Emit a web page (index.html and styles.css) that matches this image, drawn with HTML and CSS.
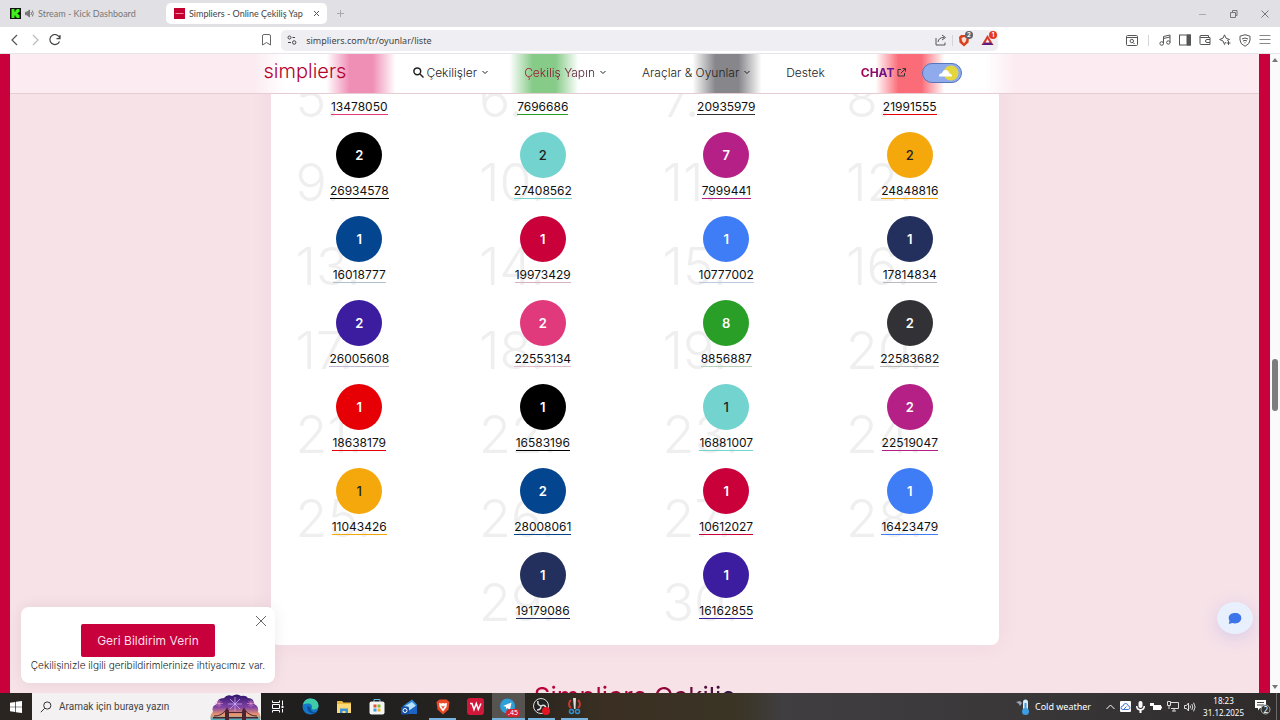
FILE: index.html
```html
<!DOCTYPE html>
<html lang="tr">
<head>
    <meta charset="UTF-8">
    <meta name="viewport" content="width=device-width, initial-scale=1.0">
    <title>Simpliers - Online Çekiliş Yap</title>
    <link rel="stylesheet" href="styles.css">
</head>
<body>
    <!-- tabs -->
    <div class="tabbar">
        <div class="tab">
            <svg width="11" height="11" viewBox="0 0 11 11"><rect width="11" height="11" fill="#111"/><path d="M1.5 1h3v2.5h1V2h1V1h3v3h-1v1h-1v1h1v1h1v3h-3V9h-1V7.500h-1V10h-3z" fill="#3ff01a"/></svg>
            <svg class="sound" width="9" height="9" viewBox="0 0 9 9" fill="none" stroke="#777"><path d="M.5 3.200h1.500L4.500 1v7L2 5.800H.5z" fill="#777"/><path d="M6 3q1 1.500 0 3M7.300 1.500q2 3 0 6"/></svg>
            <span>Stream - Kick Dashboard</span>
        </div>
        <div class="tab active">
            <svg width="11" height="11" viewBox="0 0 11 11"><rect width="11" height="11" fill="#c3002f"/><path d="M1.500 5.500h8" stroke="#f08aa2"/></svg>
            <span>Simpliers - Online Çekiliş Yap</span>
            <button class="tab-close" aria-label="Kapat"><svg width="7" height="7" viewBox="0 0 7 7" stroke="#555"><path d="M1 1l5 5M6 1l-5 5"/></svg></button>
        </div>
        <button class="new-tab" aria-label="Yeni sekme"><svg width="7" height="7" viewBox="0 0 7 7" stroke="#aaa"><path d="M3.500 0v7M0 3.500h7"/></svg></button>
        <div class="window-buttons">
            <button aria-label="Küçült"><svg width="8" height="8" viewBox="0 0 8 8" stroke="#aaa"><path d="M0 4.500h7"/></svg></button>
            <button aria-label="Geri yükle"><svg width="8" height="8" viewBox="0 0 8 8" fill="none" stroke="#777"><path d="M.5 2.500h5v5h-5zM2.500 2.500v-2h4.500v5H5.500"/></svg></button>
            <button aria-label="Kapat"><svg width="8" height="8" viewBox="0 0 8 8" stroke="#777"><path d="M.5.5l7 7M7.500.5l-7 7"/></svg></button>
        </div>
    </div>

    <!-- address bar -->
    <div class="toolbar">
        <div class="nav-buttons">
            <button aria-label="Geri"><svg width="12" height="12" viewBox="0 0 12 12" fill="none" stroke="#555" stroke-width="1.200"><path d="M8 1L3 6l5 5"/></svg></button>
            <button aria-label="İleri"><svg width="12" height="12" viewBox="0 0 12 12" fill="none" stroke="#bbb" stroke-width="1.200"><path d="M4 1l5 5-5 5"/></svg></button>
            <button aria-label="Yenile"><svg width="12" height="12" viewBox="0 0 12 12" fill="none" stroke="#444" stroke-width="1.200"><path d="M10.500 7.500A5 5 0 1 1 10.800 4.500M11 1v3.600H7.500"/></svg></button>
        </div>
        <button class="bookmark" aria-label="Yer işareti"><svg width="9" height="12" viewBox="0 0 9 12" fill="none" stroke="#666"><path d="M.5 2q0-1.500 1.500-1.500h5q1.500 0 1.500 1.500v9L4.500 8.500.5 11z"/></svg></button>
        <div class="address">
            <svg width="10" height="10" viewBox="0 0 10 10" fill="none" stroke="#444"><circle cx="2.500" cy="2.500" r="1.500"/><path d="M5.500 2.500H8M1 7.500h3"/><circle cx="7.200" cy="7.500" r="1.700"/></svg>
            <input type="text" aria-label="Adres" value="simpliers.com/tr/oyunlar/liste">
            <svg width="12" height="12" viewBox="0 0 12 12" fill="none" stroke="#555"><path d="M1 4v7h9V8.500M3 8q.5-4.500 6-4.500M7 1l3.500 2.500L7 6"/></svg>
            <i class="sep"></i>
            <span class="ext">
                <svg width="12" height="13" viewBox="0 0 12 13"><path d="M3 1h6l2 2-.5 5.500L6 12.500 1.500 8.500 1 3z" fill="#d8401f"/><path d="M3.500 4L6 3l2.500 1-.5 3-2 2.500L4 7z" fill="#fbdcd0"/></svg>
                <b class="badge grey">2</b>
            </span>
            <span class="ext">
                <svg width="13" height="12" viewBox="0 0 13 12"><path d="M6.500 1L12.500 11H.5z" fill="#d93a2a"/><path d="M.5 11L4 8.500h5.500l3 2.500z" fill="#5b1d83"/><path d="M6.500 5L8.500 8.600h-4z" fill="#fff"/></svg>
                <b class="badge red">1</b>
            </span>
        </div>
        <div class="tools">
            <svg width="12" height="11" viewBox="0 0 12 11" fill="none" stroke="#555"><rect x=".5" y=".5" width="11" height="10" rx="1"/><path d="M.5 2.500h11M7 7.500L8.500 9"/><circle cx="5.800" cy="6" r="1.700"/></svg>
            <i class="sep"></i>
            <svg width="12" height="12" viewBox="0 0 12 12" fill="none" stroke="#555"><path d="M4.500 9.500V2.500L11 1v7.500M4.500 4.500L11 3"/><circle cx="2.700" cy="9.500" r="1.800"/><circle cx="9.300" cy="8.500" r="1.700"/></svg>
            <svg width="12" height="12" viewBox="0 0 12 12" fill="none" stroke="#555"><rect x=".5" y="1" width="11" height="10"/><path d="M8 1h3.500v10H8z" fill="#555"/></svg>
            <svg width="12" height="12" viewBox="0 0 12 12" fill="none" stroke="#555"><path d="M1 2.500v7q0 1 1 1h9v-7H2q-1 0-1-1t1-1h7.500v2M11 5.500H8q-1.500 0-1.500 1.500T8 8.500h3"/></svg>
            <svg width="12" height="12" viewBox="0 0 12 12" fill="none" stroke="#555"><path d="M10.500 5.500L7 4.200 5.500.8 4 4.200.6 5.500 4 7l1.500 3.500L6.500 8M10.500 5.500L8 6.500M9.500 7v4M7.500 9h4"/></svg>
            <svg width="12" height="13" viewBox="0 0 12 13" fill="none" stroke="#555"><path d="M6 .7l5 1.500V6q0 4-5 6.300Q1 10 1 6V2.200zM3 5q3-2 6 0M4 7q2-1.300 4 0M5.500 8.800h1"/></svg>
            <svg width="12" height="12" viewBox="0 0 12 12" stroke="#888"><path d="M.5 1.500h11M.5 5.500h11M.5 9.500h11"/></svg>
        </div>
    </div>

    <div class="viewport">
        <div class="page">
            <header class="site-header">
                <nav class="nav">
                    <a class="logo" href="#">simpliers</a>
                    <a href="#"><svg class="search-icon" width="11" height="11" viewBox="0 0 11 11" fill="none" stroke="#222" stroke-width="1.500"><circle cx="4.300" cy="4.300" r="3.400"/><path d="M7 7l3.500 3.500"/></svg>Çekilişler<svg class="caret" width="6" height="5" viewBox="0 0 6 5"><path d="M.5 1L3 3.500 5.500 1"/></svg></a>
                    <a class="hot" href="#"><span>Çekiliş Yapın</span><svg class="caret" width="6" height="5" viewBox="0 0 6 5"><path d="M.5 1L3 3.500 5.500 1"/></svg></a>
                    <a href="#">Araçlar &amp; Oyunlar<svg class="caret" width="6" height="5" viewBox="0 0 6 5"><path d="M.5 1L3 3.500 5.500 1"/></svg></a>
                    <a href="#">Destek</a>
                    <a class="chat-link" href="#"><span>CHAT</span><svg width="9" height="9" viewBox="0 0 9 9" fill="none" stroke="#333"><path d="M4 1.500H1v6.500h6.500V5M5.500.6h3v3M8.300.8L3.800 5.200"/></svg></a>
                    <button class="theme-toggle" aria-label="Tema">
                        <svg width="38" height="18" viewBox="0 0 38 18"><circle cx="28" cy="9" r="7.500" fill="#e3d63f"/><path d="M16 12.500q-.5-3 3-3.200 1-4 4.500-3.300 2.500.5 2.700 3.500 2.800 0 2.800 3z" fill="#fff"/></svg>
                    </button>
                </nav>
            </header>

            <main class="card">
                <ul class="winners">
                    <li class="pink"><span class="order">5.</span><b class="ball"></b><a href="#">13478050</a></li>
                    <li class="green"><span class="order">6.</span><b class="ball"></b><a href="#">7696686</a></li>
                    <li class="dark"><span class="order">7.</span><b class="ball"></b><a href="#">20935979</a></li>
                    <li class="red"><span class="order">8.</span><b class="ball"></b><a href="#">21991555</a></li>
                    <li class="black"><span class="order">9.</span><b class="ball">2</b><a href="#">26934578</a></li>
                    <li class="teal"><span class="order">10.</span><b class="ball">2</b><a href="#">27408562</a></li>
                    <li class="magenta"><span class="order">11.</span><b class="ball">7</b><a href="#">7999441</a></li>
                    <li class="orange"><span class="order">12.</span><b class="ball">2</b><a href="#">24848816</a></li>
                    <li class="blue faint"><span class="order">13.</span><b class="ball">1</b><a href="#">16018777</a></li>
                    <li class="crimson faint"><span class="order">14.</span><b class="ball">1</b><a href="#">19973429</a></li>
                    <li class="sky faint"><span class="order">15.</span><b class="ball">1</b><a href="#">10777002</a></li>
                    <li class="navy faint"><span class="order">16.</span><b class="ball">1</b><a href="#">17814834</a></li>
                    <li class="purple faint"><span class="order">17.</span><b class="ball">2</b><a href="#">26005608</a></li>
                    <li class="pink faint"><span class="order">18.</span><b class="ball">2</b><a href="#">22553134</a></li>
                    <li class="green faint"><span class="order">19.</span><b class="ball">8</b><a href="#">8856887</a></li>
                    <li class="dark faint"><span class="order">20.</span><b class="ball">2</b><a href="#">22583682</a></li>
                    <li class="red"><span class="order">21.</span><b class="ball">1</b><a href="#">18638179</a></li>
                    <li class="black"><span class="order">22.</span><b class="ball">1</b><a href="#">16583196</a></li>
                    <li class="teal"><span class="order">23.</span><b class="ball">1</b><a href="#">16881007</a></li>
                    <li class="magenta"><span class="order">24.</span><b class="ball">2</b><a href="#">22519047</a></li>
                    <li class="orange"><span class="order">25.</span><b class="ball">1</b><a href="#">11043426</a></li>
                    <li class="blue"><span class="order">26.</span><b class="ball">2</b><a href="#">28008061</a></li>
                    <li class="crimson"><span class="order">27.</span><b class="ball">1</b><a href="#">10612027</a></li>
                    <li class="sky"><span class="order">28.</span><b class="ball">1</b><a href="#">16423479</a></li>
                    <li class="navy"><span class="order">29.</span><b class="ball">1</b><a href="#">19179086</a></li>
                    <li class="purple"><span class="order">30.</span><b class="ball">1</b><a href="#">16162855</a></li>
                </ul>
            </main>
            <h1 class="title"><span>Simpliers Çekiliş</span></h1>

            <div class="feedback">
                <button class="feedback-close" aria-label="Kapat"><svg width="12" height="12" viewBox="0 0 12 12" stroke="#666"><path d="M1 1l10 10M11 1L1 11"/></svg></button>
                <button class="feedback-btn">Geri Bildirim Verin</button>
                <p>Çekilişinizle ilgili geribildirimlerinize ihtiyacımız var.</p>
            </div>
            <button class="chat-bubble" aria-label="Sohbet">
                <svg width="14" height="13" viewBox="0 0 14 13"><path d="M7 1C3 1 .7 3.300.7 6q0 1.500.8 2.800L.8 12l3.400-1q1.300.4 2.800.4c4 0 6.300-2.400 6.300-5.400S11 1 7 1z" fill="#3d74ea"/></svg>
            </button>
        </div>
        <div class="scrollbar">
            <svg width="6" height="4" viewBox="0 0 6 4"><path d="M0 4l3-4 3 4z" fill="#777"/></svg>
            <div class="thumb"></div>
            <svg width="6" height="4" viewBox="0 0 6 4"><path d="M0 0l3 4 3-4z" fill="#777"/></svg>
        </div>
    </div>

    <!-- taskbar -->
    <footer class="taskbar">
        <button class="start" aria-label="Başlat"><svg width="12" height="12" viewBox="0 0 12 12" fill="#fff"><path d="M0 1.700l5.300-.8v4.800H0zM6 .8L12 0v5.700H6zM0 6.300h5.300v4.800L0 10.300zM6 6.300h6V12l-6-.8z"/></svg></button>
        <div class="search">
            <svg width="12" height="12" viewBox="0 0 12 12" fill="none" stroke="#333"><circle cx="7.300" cy="4.500" r="3.600"/><path d="M4.700 7.300L.8 11.200"/></svg>
            <input type="text" aria-label="Arama" placeholder="Aramak için buraya yazın">
            <svg width="51" height="26" viewBox="0 0 51 26">
                <defs>
                    <linearGradient id="dusk" x1="0" y1="0" x2="0" y2="1"><stop offset="0" stop-color="#30146b"/><stop offset=".5" stop-color="#8243a4"/><stop offset=".8" stop-color="#f09a6a"/><stop offset="1" stop-color="#3fb0c4"/></linearGradient>
                </defs>
                <path d="M1 26q-2-5 2-8-2-6 4-8 0-6 7-6 3-4 8-2 5-3 9 0 5-1 7 2 6 0 6 6 5 2 4 8 4 3 2 8z" fill="url(#dusk)"/>
                <path d="M25 3v14M18 10h14M20 5l10 10M30 5L20 15" stroke="#cfb4ff" stroke-width=".7"/>
                <path d="M9 6v7M5 9.500h8M6.500 7l5 5M11.500 7l-5 5M41 6v7M37 9.500h8M38.500 7l5 5M43.500 7l-5 5" stroke="#f29ad2" stroke-width=".6"/>
                <path d="M15 26v-9l2-4 2 4v9zM32 26v-9l2-4 2 4v9zM3 23h45v1.500H3zM18 18h15v1H18z" fill="#4b2430"/>
                <path d="M4 22q8 0 12-6M47 22q-8 0-12-6" fill="none" stroke="#4b2430"/>
            </svg>
        </div>
        <div class="apps">
            <button aria-label="Görev görünümü"><svg width="13" height="13" viewBox="0 0 13 13" fill="none" stroke="#fff"><path d="M1.500.5v2h7v-2M1.500 12.500v-2h7v2M1.500 4.500h7v4h-7zM11.500.5v5M11.500 9v3.500"/><path d="M10.500 7h2" stroke-width="2"/></svg></button>
            <button aria-label="Edge"><svg width="17" height="17" viewBox="0 0 17 17"><circle cx="8.500" cy="8.500" r="8" fill="#1477c9"/><path d="M.8 7C2 2.500 5 .5 8.500.5c5 0 8 3.500 8 7 0 3-2.500 4-5 4-2 0-2-1-1.500-2 .5-2-1-4-3.500-4C3.500 5.500 1.500 6 .8 7z" fill="#3fcba8"/><path d="M5.500 8c-1 4 2 7.500 6 7.500 1.500 0 3-.8 3.500-1.500-4 1-7-1-6.500-4.500z" fill="#0c4d96"/></svg></button>
            <button aria-label="Dosyalar"><svg width="16" height="14" viewBox="0 0 16 14"><path d="M1 1h5l1.500 1.500H15V13H1z" fill="#e9b93e"/><path d="M1 4h14v9H1z" fill="#fbd976"/><path d="M4 13V8.500h8V13h-2.500v-2h-3v2z" fill="#3d94d9"/></svg></button>
            <button aria-label="Mağaza"><svg width="16" height="17" viewBox="0 0 16 17"><path d="M5 4V1.500h6V4" fill="none" stroke="#5fc2ee"/><rect x=".5" y="3.500" width="15" height="13" rx="2" fill="#f4f4f4"/><path d="M4.500 6.500h3v3h-3z" fill="#e5522b"/><path d="M8.500 6.500h3v3h-3z" fill="#7eb93b"/><path d="M4.500 10.500h3v3h-3z" fill="#3d9fe0"/><path d="M8.500 10.500h3v3h-3z" fill="#f2b825"/></svg></button>
            <button aria-label="Outlook"><svg width="17" height="16" viewBox="0 0 17 16"><path d="M2 7l9-6.500 5 5V15H3z" fill="#2f8be0"/><path d="M4 7l7-4 4 4-6 5z" fill="#b9e2fb"/><path d="M3 15l13-9v9z" fill="#1c64c4"/><rect y="7.500" width="8" height="8" rx="1.500" fill="#1550a8"/><circle cx="4" cy="11.500" r="2" fill="none" stroke="#fff"/></svg></button>
            <button class="open" aria-label="Brave"><svg width="14" height="16" viewBox="0 0 14 16"><path d="M3.500.5h7L13.500 3l-1 7.500L7 15.500 1.500 10.500.5 3z" fill="#ec4a27"/><path d="M3 4l2.500.5L7 4l1.500.5L11 4l-.5 4L7 12.500 3.500 8z" fill="#fff"/><path d="M5 6.500l2 1 2-1L7 10z" fill="#ec4a27"/></svg></button>
            <button aria-label="WPS"><svg width="17" height="17" viewBox="0 0 17 17"><rect width="17" height="17" rx="3" fill="#d3173a"/><path d="M3 5.500h2l2 6 2.300-6 2 6 2.700-6" fill="none" stroke="#fff" stroke-width="1.500"/></svg></button>
            <button class="open current" aria-label="Telegram"><svg width="17" height="17" viewBox="0 0 17 17"><circle cx="7.500" cy="8" r="7.500" fill="#2f9fd8"/><path d="M3 8l8.500-3.500L10 12 7.500 10 6 11V8.800z" fill="#fff"/></svg><b class="count">.45</b></button>
            <button class="open" aria-label="OBS"><svg width="17" height="17" viewBox="0 0 17 17"><circle cx="8" cy="8" r="7.500" fill="#222" stroke="#ddd"/><path d="M8 8q-4-1-3-5M8 8q4-2 5 2M8 8q0 4-4 4" fill="none" stroke="#ddd" stroke-width="1.500"/><circle cx="13" cy="13" r="4" fill="#e3131f"/></svg></button>
            <button class="open" aria-label="Ekran alıntısı"><svg width="15" height="17" viewBox="0 0 15 17"><path d="M4 10A5 5 0 0 1 4 2M11 2a5 5 0 0 1 0 8" fill="none" stroke="#c93a30" stroke-width="2"/><path d="M6 0l1 11h1.500L9 0z" fill="#ddd"/><circle cx="4.500" cy="13.500" r="2" fill="none" stroke="#3390d0" stroke-width="1.500"/><circle cx="10.500" cy="13.500" r="2" fill="none" stroke="#3390d0" stroke-width="1.500"/></svg></button>
        </div>
        <div class="tray">
            <svg width="14" height="16" viewBox="0 0 14 16"><path d="M0 3l4-1 2 2-2 3-1-2z" fill="#9aa6b8"/><rect x="7" y=".5" width="5" height="12" rx="2.500" fill="#d7edf9"/><circle cx="9.500" cy="12.500" r="3.500" fill="#3c9de0"/><path d="M9.500 4v8" stroke="#3c9de0" stroke-width="2"/></svg>
            <span class="weather">Cold weather</span>
            <svg width="9" height="6" viewBox="0 0 9 6" fill="none" stroke="#fff"><path d="M.5 5L4.500 1l4 4"/></svg>
            <svg width="11" height="11" viewBox="0 0 11 11"><rect width="11" height="11" rx="1" fill="#fff"/><path d="M3 8.500q-2 0-2-1.700T3 5q.5-2.500 2.700-2.500T8.300 5q1.700 0 1.700 1.700T8.200 8.500zM4 8l2.500-2.500" fill="none" stroke="#3d74d8"/></svg>
            <svg width="9" height="12" viewBox="0 0 9 12" fill="#fff"><rect x="2.500" width="4" height="7" rx="2"/><path d="M0 5h1.500q0 3 3 3t3-3H9q0 4-3.500 4.500v2.500h-2V9.500Q0 9 0 5z"/></svg>
            <svg width="12" height="9" viewBox="0 0 12 9"><path d="M0 1h4v3H0zM3 3h8v5H3z" fill="#fff"/><path d="M11 4.500h1v2h-1z" fill="#fff"/></svg>
            <svg width="12" height="11" viewBox="0 0 12 11" fill="none" stroke="#ddd"><path d="M3 1.500h8.500v6H4M5 10h4M7 7.500V10M.5.5h3v4h-3zM2 4.500V8"/></svg>
            <svg width="12" height="10" viewBox="0 0 12 10" fill="none" stroke="#ddd"><path d="M.5 3.500h2l2-2.500v8l-2-2.500h-2zM6 3.500q1 1.500 0 3M7.800 2q2 3 0 6M9.600.7q3 4.300 0 8.600"/></svg>
            <div class="clock"><span>18:23</span><span>31.12.2025</span></div>
            <svg width="16" height="16" viewBox="0 0 16 16"><path d="M0 1h11v8H5l-2 2.500V9H0z" fill="#fff"/><path d="M2 3.500h7M2 6h7" stroke="#444"/><circle cx="10.500" cy="10.500" r="4.500" fill="#333" stroke="#aaa"/><text x="8.500" y="13.500" class="notif">2</text></svg>
            <i class="show-desktop"></i>
        </div>
    </footer>
</body>
</html>
```
FILE: styles.css
```css
* {
    box-sizing: border-box;
}
body {
    margin: 0;
    height: 100vh;
    display: flex;
    flex-direction: column;
    overflow: hidden;
    font-family: Inter, "Liberation Sans", sans-serif;
    font-size: 12px;
    color: #222;
}
button {
    padding: 0;
    border: 0;
    background: none;
    font-family: inherit;
    display: flex;
    align-items: center;
    justify-content: center;
}
input {
    border: 0;
    padding: 0;
    background: none;
    outline: none;
    min-width: 0;
}
a {
    color: inherit;
    text-decoration: none;
}
svg {
    flex: none;
}

/* tabs */
.tabbar {
    height: 27px;
    display: flex;
    align-items: center;
    background: #e1e0e5;
    font-family: Lato, sans-serif;
    font-size: 9px;
    color: #777;
    white-space: nowrap;
}
.tab {
    display: flex;
    align-items: center;
    gap: 4px;
    width: 166px;
    height: 21px;
    padding-left: 10px;
}
.tab.active {
    width: 161px;
    padding: 0 7px 0 8px;
    background: #fff;
    border-radius: 5px;
    color: #444;
}
.tab-close {
    margin-left: auto;
}
.new-tab {
    margin-left: 10px;
}
.window-buttons {
    margin-left: auto;
    display: flex;
    gap: 23px;
    padding-right: 11px;
}

/* address bar */
.toolbar {
    height: 27px;
    display: flex;
    align-items: center;
    background: #fff;
    border-bottom: 1px solid #e6e4e8;
    border-radius: 6px 6px 0 0;
}
.nav-buttons {
    display: flex;
    gap: 8px;
    padding-left: 9px;
}
.bookmark {
    margin-left: auto;
    margin-right: 10px;
}
.address {
    display: flex;
    align-items: center;
    gap: 9px;
    width: 56%;
    height: 21px;
    padding: 0 2px 0 6px;
    background: #efeef2;
    border-radius: 5px;
}
.address input {
    flex: 1;
    font-family: "Noto Sans", sans-serif;
    font-size: 9px;
    color: #444;
}
.sep {
    width: 1px;
    height: 11px;
    background: #d5d4da;
}
.address .sep {
    margin: 0 -4px;
}
.ext {
    position: relative;
    display: flex;
    margin-right: 2px;
}
.badge {
    position: absolute;
    top: -3px;
    right: -3px;
    width: 8px;
    height: 8px;
    border-radius: 50%;
    color: #fff;
    font-size: 6px;
    line-height: 8px;
    text-align: center;
}
.badge.grey {
    background: #5b6470;
}
.badge.red {
    background: #e33a22;
}
.tools {
    display: flex;
    align-items: center;
    gap: 8px;
    margin-left: 10%;
    padding-right: 9px;
}
.tools .sep {
    margin: 0 2px;
}

/* page */
.viewport {
    flex: 1;
    min-height: 0;
    display: flex;
}
.page {
    position: relative;
    flex: 1;
    overflow: hidden;
    background: #f7e2e8;
    border: solid #c8003b;
    border-width: 0 11px 0 10px;
}
.site-header {
    position: absolute;
    top: 0;
    left: 0;
    right: 0;
    z-index: 5;
    height: 40px;
    /* frosted colours of the balls scrolled under the bar */
    background: linear-gradient(90deg,
        #fcecf1 calc(50% - 380px), #fff calc(50% - 350px),
        #fff calc(50% - 308px), #f08fb6 calc(50% - 285px), #f08fb6 calc(50% - 262px), #fff calc(50% - 239px),
        #fff calc(50% - 125px), #86cb87 calc(50% - 102px), #86cb87 calc(50% - 79px), #fff calc(50% - 56px),
        #fff calc(50% + 58px), #86868b calc(50% + 81px), #86868b calc(50% + 104px), #fff calc(50% + 127px),
        #fff calc(50% + 241px), #fa6c78 calc(50% + 264px), #fa6c78 calc(50% + 287px), #fff calc(50% + 310px),
        #fff calc(50% + 350px), #fcecf1 calc(50% + 380px));
    border-bottom: 1px solid #e6ccd3;
}
.nav {
    display: flex;
    align-items: center;
    width: 742px;
    height: 100%;
    margin: 0 auto;
    padding-bottom: 2px;
    font-size: 12px;
    font-weight: 300;
}
.nav a {
    display: flex;
    align-items: center;
    margin-right: 36px;
}
.nav .logo {
    margin-right: 67px;
    padding-bottom: 3px;
    font-size: 20px;
    color: #b5002f;
}
.search-icon {
    margin-right: 2px;
}
.caret {
    margin-left: 5px;
    fill: none;
    stroke: #222;
}
.hot span {
    background: linear-gradient(90deg, #b5103a, #3a1a2c);
    background-clip: text;
    color: transparent;
}
.nav .chat-link {
    margin-right: 16px;
    gap: 2px;
    font-weight: 700;
}
.chat-link span {
    background: linear-gradient(90deg, #a8004a, #5a1ca0);
    background-clip: text;
    color: transparent;
}
.theme-toggle {
    width: 40px;
    height: 20px;
    background: #8fabec;
    border: 1px solid #5577bd;
    border-radius: 10px;
}
.card {
    width: 728px;
    max-width: 100%;
    margin: -6px auto 0;
    padding-bottom: 9px;
    background: #fff;
    border-radius: 8px;
    box-shadow: 0 0 24px rgba(90, 20, 50, .05);
}
.winners {
    display: flex;
    flex-wrap: wrap;
    justify-content: center;
    margin: 0 -3px;
    padding: 0;
    list-style: none;
}
.winners li {
    position: relative;
    display: flex;
    flex-direction: column;
    align-items: center;
    width: 25%;
    height: 84px;
}
.order {
    position: absolute;
    left: 28px;
    top: 19px;
    font-size: 52px;
    line-height: 64px;
    font-weight: 300;
    color: #efefef;
}
.ball {
    z-index: 1;
    width: 46px;
    height: 46px;
    border-radius: 50%;
    background: var(--color);
    color: #fff;
    font-size: 13px;
    font-weight: 600;
    line-height: 46px;
    text-align: center;
}
.winners a {
    z-index: 1;
    padding-top: 5px;
    border-bottom: 1px solid var(--color);
    line-height: 15px;
    color: #111;
}
.winners .faint a {
    border-color: color-mix(in srgb, var(--color) 20%, #ddd);
}
.black { --color: #000; }
.teal { --color: #72d3cf; }
.magenta { --color: #b42085; }
.orange { --color: #f5a80c; }
.blue { --color: #04458f; }
.crimson { --color: #c90039; }
.sky { --color: #3f7df6; }
.navy { --color: #232f5c; }
.purple { --color: #3d1d9f; }
.pink { --color: #e03a7c; }
.green { --color: #2a9f27; }
.dark { --color: #323236; }
.red { --color: #e60005; }
.teal .ball,
.orange .ball {
    color: #222;
    font-weight: 500;
}
.title {
    margin: 32px 0 0;
    font-size: 26px;
    line-height: 40px;
    font-weight: 400;
    text-align: center;
}
.title span {
    background: linear-gradient(90deg, #c0003a, #a00038 60%, #2a1540);
    background-clip: text;
    color: transparent;
}

/* feedback box */
.feedback {
    position: absolute;
    left: 11px;
    bottom: 10px;
    z-index: 6;
    width: 254px;
    padding: 17px 0 10px;
    background: #fff;
    border-radius: 8px;
    box-shadow: 0 0 16px rgba(0, 0, 0, .08);
}
.feedback-btn {
    margin: 0 auto;
    padding: 0 16px;
    height: 33px;
    background: #c8003b;
    border-radius: 2px;
    color: #fbdfe7;
    font-size: 12px;
}
.feedback p {
    margin: 0;
    font-size: 10px;
    line-height: 16px;
    text-align: center;
    white-space: nowrap;
    font-weight: 300;
}
.feedback-close {
    position: absolute;
    top: 8px;
    right: 8px;
}
.chat-bubble {
    position: absolute;
    right: 6px;
    bottom: 59px;
    width: 36px;
    height: 32px;
    background: #e9f0fd;
    border-radius: 50%;
    box-shadow: 0 4px 18px rgba(90, 110, 230, .2);
}
.scrollbar {
    display: flex;
    flex-direction: column;
    align-items: center;
    justify-content: space-between;
    width: 10px;
    padding: 4px 0;
    background: #fbfafb;
}
.thumb {
    width: 6px;
    height: 52px;
    margin-top: 23px;
    border-radius: 3px;
    background: #7d7d7d;
}

/* taskbar */
.taskbar {
    height: 27px;
    display: flex;
    align-items: center;
    overflow: hidden;
    background: linear-gradient(90deg, #2b2521, #1f1e1e 25%, #2a2620 42%, #3a2f22 47%, #3a3526 58%, #403e40 61%, #3a3739 80%, #2f2b2b);
    font-family: "Noto Sans", sans-serif;
    font-size: 9px;
    color: #fff;
}
.start {
    width: 32px;
}
.search {
    display: flex;
    align-items: center;
    gap: 7px;
    width: 229px;
    height: 100%;
    padding-left: 8px;
    background: #f3f1f2;
}
.search input {
    flex: 1;
    font-family: Roboto, sans-serif;
    font-size: 10px;
}
.search input::placeholder {
    color: #444;
}
.apps {
    display: flex;
    height: 100%;
}
.apps button {
    position: relative;
    width: 33px;
    height: 100%;
}
.apps .open::after {
    content: "";
    position: absolute;
    left: 3px;
    right: 3px;
    bottom: 0;
    height: 2px;
    background: #76b3df;
}
.apps .current {
    background: #565350;
}
.apps .current::after {
    left: 0;
    right: 0;
}
.count {
    position: absolute;
    right: 5px;
    bottom: 3px;
    padding: 0 2px;
    border-radius: 4px;
    background: #d8232f;
    font-size: 7px;
    line-height: 8px;
    font-weight: 400;
    color: #fff;
}
.tray {
    display: flex;
    align-items: center;
    gap: 5px;
    height: 100%;
    margin-left: auto;
    padding-right: 3px;
}
.weather {
    margin-right: 10px;
    font-size: 9px;
}
.clock {
    display: flex;
    flex-direction: column;
    align-items: center;
    font-size: 8px;
    line-height: 12px;
    margin: 0 6px 0 2px;
}
.notif {
    font-size: 8px;
    fill: #fff;
}
.show-desktop {
    width: 1px;
    height: 100%;
    background: #6b6868;
}
```
